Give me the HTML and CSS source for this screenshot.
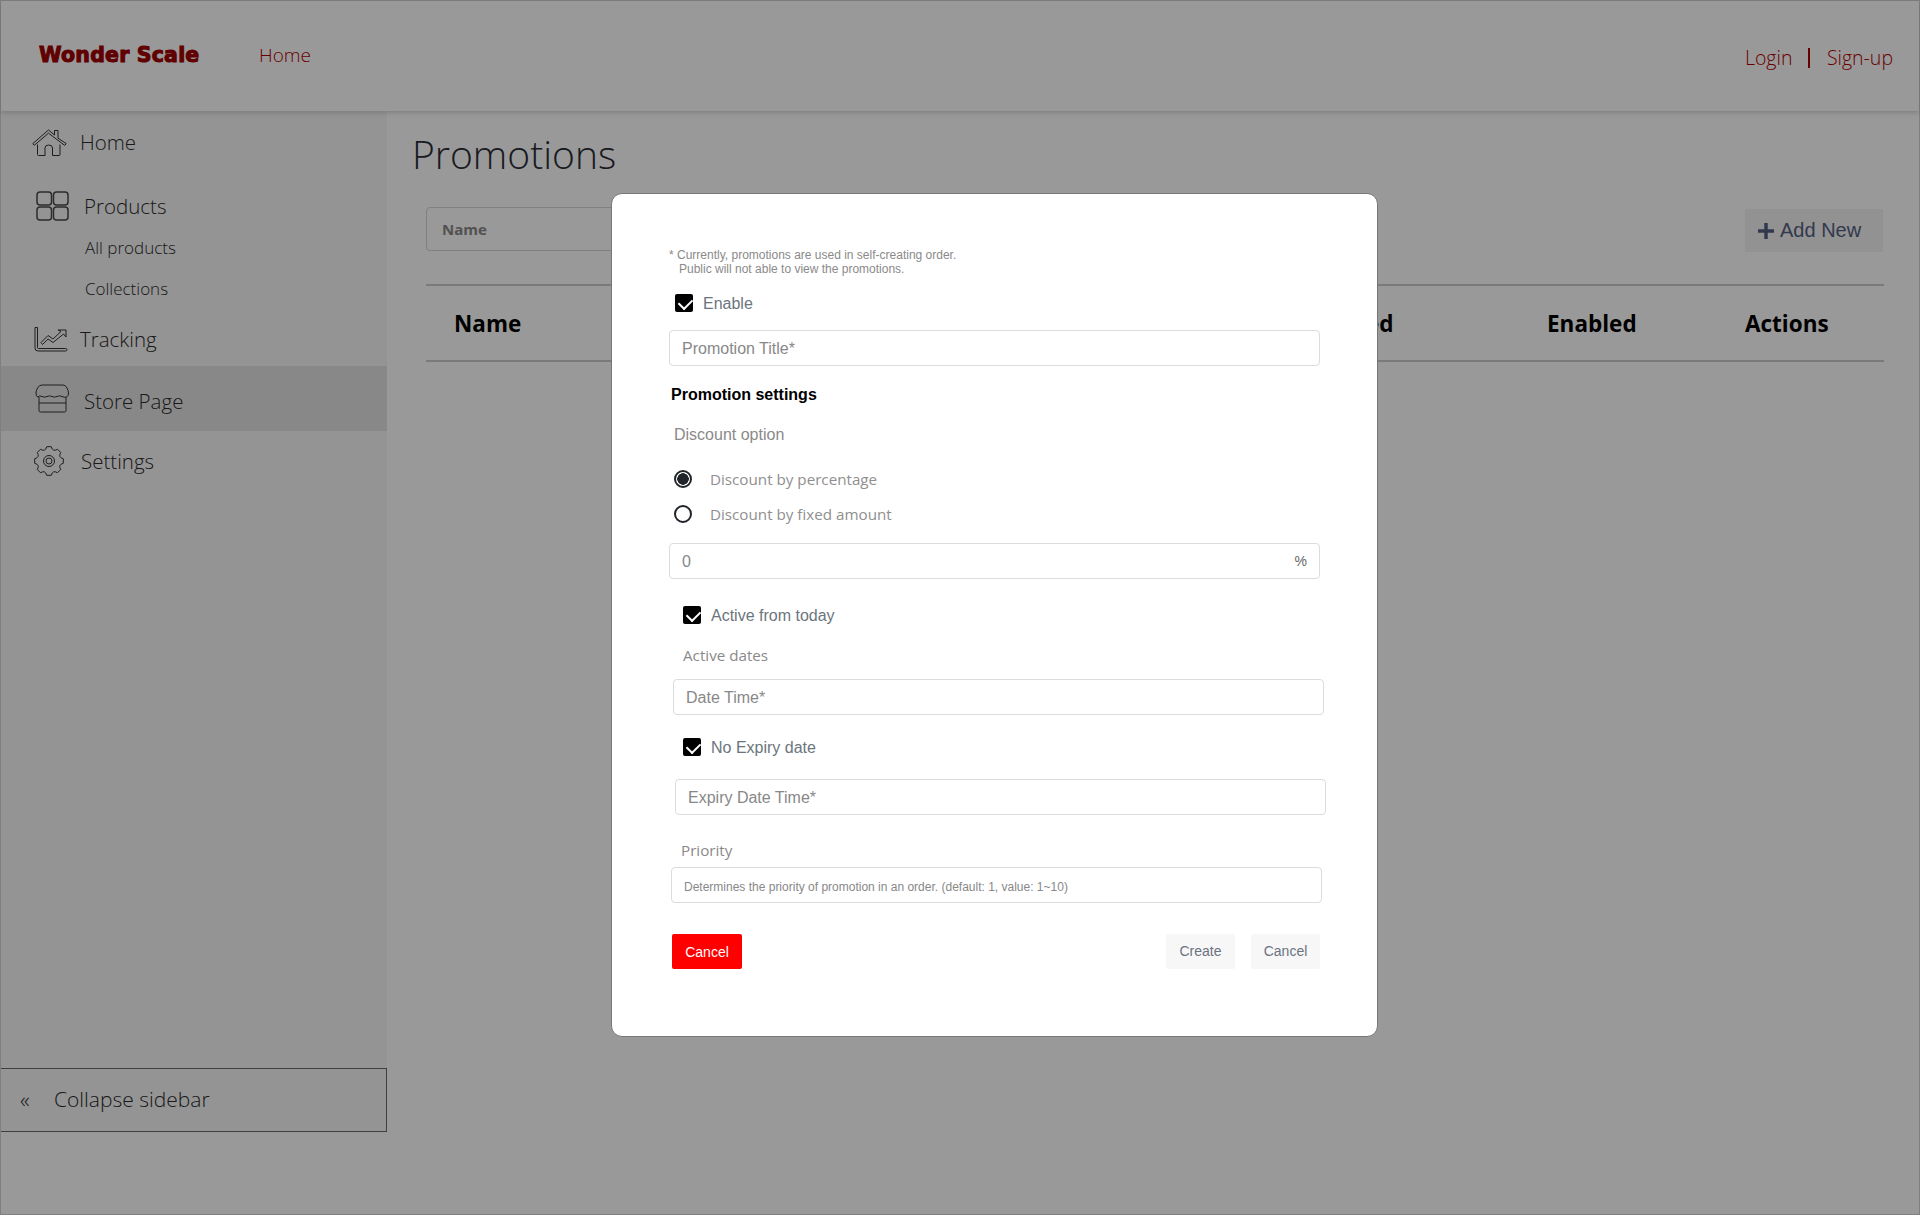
FILE: index.html
```html
<!DOCTYPE html>
<html lang="en">
<head>
  <meta charset="UTF-8" />
  <title>Wonder Scale - Promotions</title>
  <link rel="stylesheet" href="styles.css">
</head>
<body>
  <div class="page">
    <header class="topbar">
      <a class="logo">Wonder Scale</a>
      <a class="top-link">Home</a>
      <div class="top-right">
        <a class="auth-link">Login</a>
        <span class="auth-sep"></span>
        <a class="auth-link">Sign-up</a>
      </div>
    </header>

    <div class="content">
      <aside class="sidebar">
        <a class="nav-item nav-home">
          <svg class="icon" width="35" height="27" viewBox="0 0 35 27">
            <path d="M.8 14.6 16.5 1l6 5V1.500h3.500v7.700l8.200 5.400-1.500 1.800L16.500 4.200 2.300 16.300Z"/>
            <path d="M5.500 15.500v10q0 1 1 1h6.500v-7.500q0-3 3.700-3 3.800 0 3.800 3v7.500h6.500q1 0 1-1v-10"/>
          </svg>
          <span>Home</span>
        </a>
        <a class="nav-item nav-products">
          <svg class="icon" width="33" height="30" viewBox="0 0 33 30">
            <rect x="1" y="1" width="14.500" height="13" rx="3"/>
            <rect x="17.500" y="1" width="14.500" height="13" rx="3"/>
            <rect x="1" y="16" width="14.500" height="13" rx="3"/>
            <rect x="17.500" y="16" width="14.500" height="13" rx="3"/>
          </svg>
          <span>Products</span>
        </a>
        <a class="nav-sub nav-sub-first">All products</a>
        <a class="nav-sub">Collections</a>
        <a class="nav-item nav-tracking">
          <svg class="icon" width="34" height="26" viewBox="0 0 34 26">
            <path d="M1 1.500h2.500v20q0 1 1 1h27q1.500 0 1.500 1.200t-1.500 1.300H4q-3 0-3-3Z"/>
            <path d="M7 16.500l7-7 5 3.500 8-7.500-3-1.500h8v7l-2.500-3-10.500 8.500-5-3.500-5.500 5.500Z"/>
          </svg>
          <span>Tracking</span>
        </a>
        <a class="nav-item nav-store active">
          <svg class="icon" width="35" height="29" viewBox="0 0 35 29">
            <path d="M7 1h21q2.500 0 4 3t1.500 5q0 3-2 4-2 .7-4.500-.5-2.500-1.300-5 0-2.500 1.300-5 0-2.500-1.300-5 0-2.500 1.300-5 0-2.500-1.300-4.500.5Q1 12 1 9q0-2 1.500-5T7 1Z"/>
            <path d="M4 13v13.500q0 1.500 1.500 1.500h24q1.500 0 1.500-1.500V13"/>
            <path d="M4 19h27"/>
          </svg>
          <span>Store Page</span>
        </a>
        <a class="nav-item nav-settings">
          <svg class="icon" width="30" height="30" viewBox="0 0 30 30">
            <path d="M29.320 17.270Q23.780 18.640 26.730 23.520L23.520 26.730Q18.640 23.780 17.270 29.320L12.730 29.320Q11.360 23.780 6.480 26.730L3.270 23.520Q6.220 18.640.68 17.270L.68 12.730Q6.220 11.360 3.270 6.480L6.480 3.270Q11.360 6.220 12.730.68L17.270.68Q18.640 6.220 23.520 3.270L26.730 6.480Q23.780 11.360 29.320 12.730Z"/>
            <circle cx="15" cy="15" r="5.500"/>
            <circle cx="15" cy="15" r="3"/>
          </svg>
          <span>Settings</span>
        </a>
        <button class="collapse-btn"><span class="collapse-arrows">«</span>Collapse sidebar</button>
      </aside>

      <main class="main">
        <h1 class="page-title">Promotions</h1>
        <div class="toolbar">
          <input class="filter" type="text" placeholder="Name">
          <button class="add-new">
            <svg width="18" height="18" viewBox="0 0 18 18"><path d="M9 1v16M1 9h16"/></svg>
            Add New
          </button>
        </div>
        <div class="table-head">
          <div class="col-name">Name</div>
          <div class="col-expired">Expired</div>
          <div class="col-enabled">Enabled</div>
          <div class="col-actions">Actions</div>
        </div>
      </main>
    </div>
  </div>

  <div class="backdrop">
    <form class="modal">
      <p class="note">* Currently, promotions are used in self-creating order.<br>&nbsp;&nbsp; Public will not able to view the promotions.</p>

      <label class="check-row row-enable"><input type="checkbox" checked> Enable</label>
      <input class="field row-title" type="text" placeholder="Promotion Title*">

      <h2 class="section-title">Promotion settings</h2>
      <div class="group-label row-discount">Discount option</div>

      <label class="radio-row row-radio1"><input type="radio" name="discount" checked> Discount by percentage</label>
      <label class="radio-row row-radio2"><input type="radio" name="discount"> Discount by fixed amount</label>

      <div class="field field-suffix row-value">
        <input type="text" placeholder="0">
        <span>%</span>
      </div>

      <label class="check-row row-active"><input type="checkbox" checked> Active from today</label>
      <div class="soft-label row-dates">Active dates</div>
      <input class="field row-date" type="text" placeholder="Date Time*">

      <label class="check-row row-noexpiry"><input type="checkbox" checked> No Expiry date</label>
      <input class="field row-expiry" type="text" placeholder="Expiry Date Time*">

      <div class="soft-label row-priority">Priority</div>
      <input class="field field-small row-priority-input" type="text" placeholder="Determines the priority of promotion in an order. (default: 1, value: 1~10)">

      <div class="modal-actions">
        <button type="button" class="btn btn-danger">Cancel</button>
        <button type="button" class="btn btn-light btn-create">Create</button>
        <button type="button" class="btn btn-light">Cancel</button>
      </div>
    </form>
  </div>
</body>
</html>
```

FILE: styles.css
```css
* { box-sizing: border-box; }
html, body { height: 100%; }
body {
  margin: 0;
  font-family: "Open Sans", sans-serif;
  font-weight: 300;
  color: #2a2a2a;
  background: #fff;
  overflow: hidden;
}

.page {
  height: 1215px;
  display: flex;
  flex-direction: column;
  border: 1px solid #d4d4d4;
}

/* top bar */
.topbar {
  height: 110px;
  flex: none;
  display: flex;
  align-items: center;
  padding: 0 26px 2px 38px;
  background: #fff;
  box-shadow: 0 2px 5px rgba(0,0,0,0.16);
  position: relative;
  z-index: 1;
}
.logo {
  font-family: "DejaVu Sans", sans-serif;
  font-weight: 700;
  font-size: 20.5px;
  letter-spacing: 0.2px;
  color: #a00000;
  -webkit-text-stroke: 1px #a00000;
  width: 220px;
}
.top-link { font-size: 19px; color: #b00000; }
.top-right {
  margin-left: auto;
  margin-top: 5px;
  display: flex;
  align-items: center;
  font-size: 19.5px;
  color: #b00000;
}
.auth-sep {
  width: 1.500px;
  height: 20px;
  background: #b00000;
  margin: 0 17px 0 16px;
}

.content { flex: 1; display: flex; min-height: 0; }

/* sidebar */
.sidebar {
  width: 386px;
  flex: none;
  margin-bottom: 82px;
  display: flex;
  flex-direction: column;
  background: #f7f7f7;
}
.nav-item {
  display: flex;
  align-items: center;
  font-size: 20.5px;
}
.icon {
  flex: none;
  fill: none;
  stroke: #333;
  stroke-width: 1;
}
.nav-home { height: 34px; margin-top: 14px; padding-left: 31px; }
.nav-home span { margin-left: 13px; }
.nav-products { height: 34px; margin-top: 30px; padding-left: 35px; }
.nav-products span { margin-left: 15px; }
.nav-products .icon { stroke: #4a4a4a; stroke-width: 1.5; }
.nav-sub {
  display: block;
  padding-left: 84px;
  font-size: 17px;
  line-height: 24px;
  margin-top: 17px;
}
.nav-sub-first { margin-top: 13px; }
.nav-tracking { height: 34px; margin-top: 21px; padding-left: 33px; }
.nav-tracking span { margin-left: 12px; }
.nav-store { height: 65px; margin-top: 10px; padding-left: 34px; }
.nav-store span { margin: 5px 0 0 14px; }
.nav-settings { height: 34px; margin-top: 13px; padding-left: 33px; }
.nav-settings span { margin-left: 17px; }
.active { background: #e3e3e3; }

.collapse-btn {
  margin-top: auto;
  height: 64px;
  display: flex;
  align-items: center;
  padding: 0 0 2px 19px;
  border: 1px solid #6a6a6a;
  border-left: 0;
  background: transparent;
  font: inherit;
  font-size: 21px;
  color: inherit;
}
.collapse-arrows { width: 34px; text-align: left; font-size: 22px; }

/* main */
.main { flex: 1; min-width: 0; padding: 0 35px 0 25px; }
.page-title {
  margin: 16px 0 0;
  font-size: 39px;
  font-weight: 300;
  line-height: 54px;
  color: #2a2d36;
}
.toolbar {
  margin: 26px 0 0 14px;
  display: flex;
  align-items: flex-start;
  justify-content: space-between;
  height: 46px;
}
.filter {
  width: 400px;
  height: 44px;
  padding: 0 15px;
  border: 1px solid #d5d5d5;
  border-radius: 4px;
  font-family: "Open Sans", sans-serif;
  font-size: 15px;
  font-weight: 700;
}
.filter::placeholder { color: #888; opacity: 1; }
.add-new {
  width: 138px;
  height: 43px;
  margin-top: 2px;
  margin-right: 1px;
  display: flex;
  align-items: center;
  gap: 5px;
  padding: 0 0 0 12px;
  border: 0;
  background: #f3f4f6;
  font-family: "Liberation Sans", sans-serif;
  font-size: 20px;
  color: #556080;
}
.add-new path { fill: none; stroke: #556080; stroke-width: 3.5; }

.table-head {
  margin: 31px 0 0 14px;
  height: 78px;
  display: flex;
  align-items: center;
  border-top: 2px solid #ccc;
  border-bottom: 2px solid #ccc;
  font-size: 22.5px;
  font-weight: 700;
  color: #000;
}
.table-head div { padding-left: 28px; }
.col-name { width: 855px; }
.col-expired { width: 238px; }
.col-enabled { width: 198px; }
.col-actions { flex: 1; }

/* modal */
.backdrop {
  position: fixed;
  top: 0; left: 0; width: 100%; height: 100%;
  background: rgba(0,0,0,0.4);
  z-index: 20;
}
.modal {
  position: absolute;
  top: 193px;
  left: 611px;
  width: 767px;
  height: 844px;
  padding: 54px 0 0 57px;
  background: #fff;
  border: 1px solid #777;
  border-radius: 11px;
  font-family: "Liberation Sans", sans-serif;
  font-weight: 400;
  font-size: 16px;
}
.note {
  margin: 0;
  font-size: 12px;
  line-height: 14px;
  color: #8a8a8a;
}
.check-row {
  display: flex;
  align-items: flex-start;
  gap: 10px;
  height: 18px;
  line-height: 20px;
  color: #6c757d;
}
.check-row input {
  appearance: none;
  width: 18px;
  height: 18px;
  margin: 0;
  background: #000;
  border-radius: 2px;
  position: relative;
}
.check-row input::after {
  content: "";
  position: absolute;
  left: 6px;
  top: 2px;
  width: 7px;
  height: 11px;
  border: solid #fff;
  border-width: 0 2px 2px 0;
  transform: rotate(45deg);
}
.field {
  display: block;
  width: 651px;
  height: 36px;
  padding: 1px 12px 0;
  border: 1px solid #dcdcdc;
  border-radius: 4px;
  background: #fff;
  font: inherit;
}
.field::placeholder, .field-suffix input::placeholder { color: #888; opacity: 1; }
.field-suffix { display: flex; align-items: center; color: #666; font-size: 14px; }
.field-suffix span { padding-bottom: 2px; }
.field-suffix input {
  flex: 1;
  border: 0;
  outline: 0;
  padding: 0;
  font: inherit;
  font-size: 16px;
}
.field-small { font-size: 12px; padding-top: 3px; }
.section-title {
  margin: 19px 0 0 2px;
  font-size: 16px;
  line-height: 20px;
  font-weight: 700;
  color: #000;
}
.group-label { margin: 20px 0 0 5px; line-height: 20px; color: #8a8a8a; }
.soft-label {
  font-family: "Open Sans", sans-serif;
  font-size: 15.2px;
  line-height: 20px;
  color: #8a8a8a;
}
.radio-row {
  display: flex;
  align-items: center;
  gap: 18px;
  height: 24px;
  margin-left: 5px;
  font-family: "Open Sans", sans-serif;
  font-size: 15.2px;
  color: #8f8f8f;
}
.radio-row input {
  appearance: none;
  width: 18px;
  height: 18px;
  margin: 0;
  border: 2px solid #212529;
  border-radius: 50%;
  background: #fff;
}
.radio-row input:checked {
  background: radial-gradient(circle, #212529 0 5.500px, #fff 6px);
}

/* each row sits a little off the others, as in the original form */
.row-enable { margin: 18px 0 0 6px; }
.row-title { margin-top: 18px; }
.row-radio1 { margin-top: 22px; }
.row-radio2 { margin-top: 11px; }
.row-value { margin-top: 17px; }
.row-active { margin: 27px 0 0 14px; }
.row-dates { margin: 21px 0 0 14px; }
.row-date { margin: 14px 0 0 4px; }
.row-noexpiry { margin: 23px 0 0 14px; }
.row-expiry { margin: 23px 0 0 6px; }
.row-priority { margin: 25px 0 0 12px; }
.row-priority-input { margin: 7px 0 0 2px; }

.modal-actions {
  margin: 31px 0 0 3px;
  width: 648px;
  display: flex;
  gap: 16px;
}
.btn {
  width: 70px;
  height: 35px;
  border: 0;
  border-radius: 2px;
  font-family: "Liberation Sans", sans-serif;
  font-size: 14px;
}
.btn-danger { background: #f00; color: #fff; margin-right: auto; }
.btn-light { width: 69px; background: #f7f7f8; color: #6b7280; padding-bottom: 2px; }
```
